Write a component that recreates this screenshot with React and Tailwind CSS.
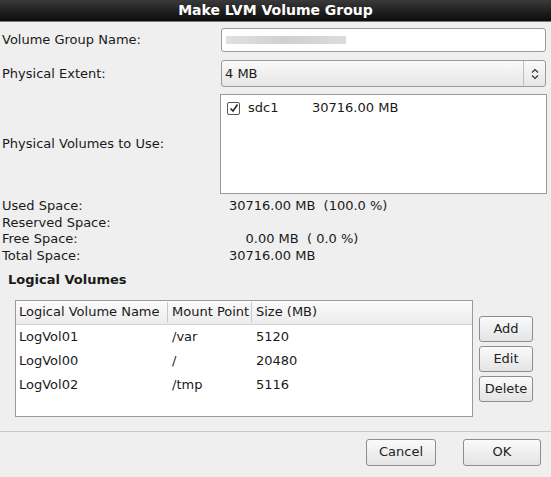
export default function App() {
  const f = { fontFamily: '"DejaVu Sans", sans-serif' };
  const btn = "flex items-center justify-center rounded-[3px] border border-[#8d8d8d] bg-gradient-to-b from-[#fafafa] to-[#e4e4e4] text-[13px] text-[#222]";
  return (
    <div style={f} className="w-[551px] h-[477px] bg-[#efefef] text-[13px] text-[#1a1a1a] flex flex-col overflow-hidden">
      <div className="h-[22px] bg-gradient-to-b from-[#3a3a3a] to-[#0c0c0c] text-white font-bold text-[14px] flex items-center justify-center border-b border-[#6b7a8a]">Make LVM Volume Group</div>
      <div className="flex items-center h-[26px] mt-[5px]">
        <div className="w-[221px] pl-[2px]">Volume Group Name:</div>
        <div className="w-[325px] h-[24px] bg-white border border-[#9a9a9a] rounded-[3px] flex items-center px-[4px]">
          <div className="w-[120px] h-[8px] bg-gradient-to-r from-[#e0e0e0] via-[#d0d0d0] to-[#dcdcdc]"></div>
        </div>
      </div>
      <div className="flex items-center h-[27px] mt-[7px]">
        <div className="w-[221px] pl-[2px]">Physical Extent:</div>
        <div className="w-[325px] h-[27px] bg-gradient-to-b from-[#fafafa] to-[#e6e6e6] border border-[#9a9a9a] rounded-[3px] flex items-center">
          <span className="flex-1 pl-[3px]">4 MB</span>
          <div className="w-[22px] h-full border-l border-[#c0c0c0] flex items-center justify-center text-[10px]">
            <svg width="8" height="12" viewBox="0 0 8 12"><path d="M1 4.5L4 1.5L7 4.5M1 7.5L4 10.5L7 7.5" fill="none" stroke="#333" strokeWidth="1.2"/></svg>
          </div>
        </div>
      </div>
      <div className="flex items-center mt-[7px] h-[100px]">
        <div className="w-[220px] pl-[2px]">Physical Volumes to Use:</div>
        <div className="w-[327px] h-[100px] bg-white border border-[#9a9a9a] self-start">
          <div className="flex items-center h-[26px] pl-[6px]">
            <div className="w-[13px] h-[13px] border border-[#555] rounded-[2px] flex items-center justify-center">
              <svg width="10" height="10" viewBox="0 0 10 10"><path d="M1.5 5.5L4 8L8.5 1.5" fill="none" stroke="#222" strokeWidth="1.5"/></svg>
            </div>
            <span className="ml-[8px] w-[64px]">sdc1</span>
            <span>30716.00 MB</span>
          </div>
        </div>
      </div>
      <div className="mt-[4px] pl-[2px] leading-[16.5px]">
        {[["Used Space:", "30716.00 MB  (100.0 %)"], ["Reserved Space:", ""], ["Free Space:", "    0.00 MB  ( 0.0 %)"], ["Total Space:", "30716.00 MB"]].map(([a, b]) => (
          <div key={a} className="flex"><span className="w-[227px]">{a}</span><span className="whitespace-pre">{b}</span></div>
        ))}
      </div>
      <div className="font-bold pl-[8px] mt-[6px]">Logical Volumes</div>
      <div className="flex mt-[10px] pl-[15px]">
        <div className="w-[458px] h-[117px] bg-white border border-[#9a9a9a]">
          <div className="flex h-[24px] bg-gradient-to-b from-[#fbfbfb] to-[#ececec] border-b border-[#d0d0d0] items-center">
            <div className="w-[152px] pl-[3px] border-r border-[#c8c8c8]">Logical Volume Name</div>
            <div className="w-[84px] pl-[4px] border-r border-[#c8c8c8]">Mount Point</div>
            <div className="pl-[4px]">Size (MB)</div>
          </div>
          {[["LogVol01", "/var", "5120"], ["LogVol00", "/", "20480"], ["LogVol02", "/tmp", "5116"]].map(r => (
            <div key={r[0]} className="flex h-[24px] items-center">
              <div className="w-[152px] pl-[3px]">{r[0]}</div>
              <div className="w-[84px] pl-[4px]">{r[1]}</div>
              <div className="pl-[4px]">{r[2]}</div>
            </div>
          ))}
        </div>
        <div className="ml-[6px] mt-[16px] flex flex-col gap-[4px]">
          <div className={btn + " w-[54px] h-[26px] border-[#6b86a8]"}>Add</div>
          <div className={btn + " w-[54px] h-[26px]"}>Edit</div>
          <div className={btn + " w-[54px] h-[26px]"}>Delete</div>
        </div>
      </div>
      <div className="mt-[14px] border-t border-[#c8c8c8]"></div>
      <div className="flex justify-end gap-[27px] pr-[10px] mt-[7px]">
        <div className={btn + " w-[70px] h-[27px]"}>Cancel</div>
        <div className={btn + " w-[78px] h-[27px]"}>OK</div>
      </div>
    </div>
  );
}
